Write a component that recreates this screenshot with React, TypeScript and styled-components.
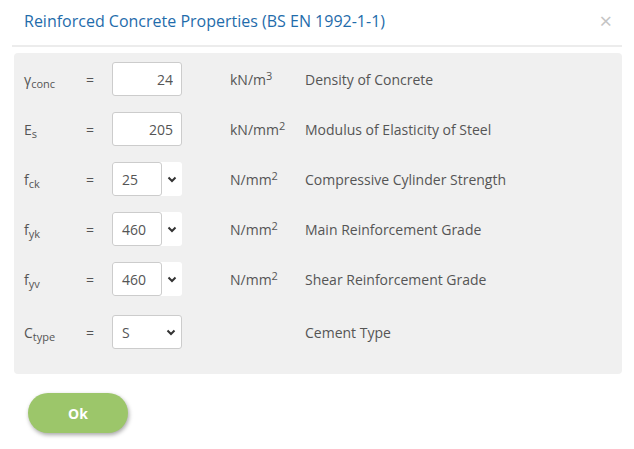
import React from 'react';
import styled, { createGlobalStyle } from 'styled-components';

const GlobalStyle = createGlobalStyle`
  html, body {
    margin: 0;
    padding: 0;
    background: #fff;
    font-family: "Open Sans", "Liberation Sans", sans-serif;
  }
`;

const Dialog = styled.div`
  width: 634px;
  height: 449px;
  box-sizing: border-box;
  padding: 0 12px 0 12px;
  background: #fff;
`;

const Header = styled.div`
  display: flex;
  justify-content: space-between;
  align-items: center;
  height: 45px;
  padding: 0 12px 0 12px;
  border-bottom: 2px solid #ececec;
`;

const Title = styled.h4`
  margin: 0;
  font-size: 16px;
  font-weight: 400;
  color: #1f6cab;
  padding-bottom: 4px;
`;

const Close = styled.span`
  font-size: 22px;
  line-height: 1;
  color: #c4c4c4;
  padding-bottom: 6px;
  margin-right: -2px;
`;

const Panel = styled.div`
  margin: 6px 0 0 2px;
  background: #f0f0f0;
  border-radius: 4px;
  padding: 9px 10px 25px 10px;
  display: flex;
  flex-direction: column;
  gap: 16px;
`;

const Row = styled.div<{ $extra?: number }>`
  display: grid;
  grid-template-columns: 61px 27px 70px 48px 75px 1fr;
  align-items: center;
  height: 34px;
  margin-top: ${(p) => p.$extra ?? 0}px;
  font-size: 14px;
  color: #555;
`;

const Symbol = styled.span`
  font-size: 14px;
  color: #555;
  sub {
    font-size: 11px;
    vertical-align: -3px;
    line-height: 0;
  }
`;

const Eq = styled.span`
  padding-left: 1px;
`;

const NumInput = styled.input`
  box-sizing: border-box;
  width: 70px;
  height: 34px;
  border: 1px solid #ccc;
  border-radius: 3px;
  background: #fff;
  text-align: right;
  padding: 0 8px;
  font: inherit;
  font-size: 14px;
  color: #555;
`;

const SelectWrap = styled.div<{ $wide?: boolean }>`
  position: relative;
  width: 70px;
  height: 34px;
  box-sizing: border-box;
  background: #fff;
  border: ${(p) => (p.$wide ? '1px solid #ccc' : 'none')};
  border-radius: 3px;
  display: flex;
  align-items: center;
`;

const SelectBox = styled.div<{ $wide?: boolean }>`
  box-sizing: border-box;
  width: ${(p) => (p.$wide ? '100%' : '50px')};
  height: 34px;
  border: ${(p) => (p.$wide ? 'none' : '1px solid #ccc')};
  border-radius: 3px;
  padding: 0 9px;
  display: flex;
  align-items: center;
  font-size: 14px;
  color: #555;
`;

const Arrow = styled.svg`
  position: absolute;
  right: 5px;
  top: 50%;
  margin-top: -3px;
`;

const Unit = styled.span`
  sup {
    font-size: 11px;
    vertical-align: 5px;
    line-height: 0;
  }
`;

const Desc = styled.span``;

const Footer = styled.div`
  padding: 19px 0 0 16px;
`;

const OkButton = styled.button`
  width: 100px;
  height: 40px;
  border: none;
  border-radius: 20px;
  background: #9cc66a;
  color: #fff;
  font-family: "Open Sans", "Liberation Sans", sans-serif;
  font-weight: 700;
  font-size: 14px;
  box-shadow: 1px 2px 4px rgba(0, 0, 0, 0.35);
  cursor: pointer;
`;

function Chevron() {
  return (
    <Arrow width="10" height="7" viewBox="0 0 10 7">
      <path d="M1.5 1.5 L5 5 L8.5 1.5" fill="none" stroke="#333" strokeWidth="2" />
    </Arrow>
  );
}

function Select(props: { value: string; wide?: boolean }) {
  return (
    <SelectWrap $wide={props.wide}>
      <SelectBox $wide={props.wide}>{props.value}</SelectBox>
      <Chevron />
    </SelectWrap>
  );
}

export default function App() {
  return (
    <Dialog>
      <GlobalStyle />
      <Header>
        <Title>Reinforced Concrete Properties (BS EN 1992-1-1)</Title>
        <Close>×</Close>
      </Header>
      <Panel>
        <Row>
          <Symbol>γ<sub>conc</sub></Symbol>
          <Eq>=</Eq>
          <NumInput defaultValue="24" />
          <span />
          <Unit>kN/m<sup>3</sup></Unit>
          <Desc>Density of Concrete</Desc>
        </Row>
        <Row>
          <Symbol>E<sub>s</sub></Symbol>
          <Eq>=</Eq>
          <NumInput defaultValue="205" />
          <span />
          <Unit>kN/mm<sup>2</sup></Unit>
          <Desc>Modulus of Elasticity of Steel</Desc>
        </Row>
        <Row>
          <Symbol>f<sub>ck</sub></Symbol>
          <Eq>=</Eq>
          <Select value="25" />
          <span />
          <Unit>N/mm<sup>2</sup></Unit>
          <Desc>Compressive Cylinder Strength</Desc>
        </Row>
        <Row>
          <Symbol>f<sub>yk</sub></Symbol>
          <Eq>=</Eq>
          <Select value="460" />
          <span />
          <Unit>N/mm<sup>2</sup></Unit>
          <Desc>Main Reinforcement Grade</Desc>
        </Row>
        <Row>
          <Symbol>f<sub>yv</sub></Symbol>
          <Eq>=</Eq>
          <Select value="460" />
          <span />
          <Unit>N/mm<sup>2</sup></Unit>
          <Desc>Shear Reinforcement Grade</Desc>
        </Row>
        <Row $extra={3}>
          <Symbol>C<sub>type</sub></Symbol>
          <Eq>=</Eq>
          <Select value="S" wide />
          <span />
          <Unit />
          <Desc>Cement Type</Desc>
        </Row>
      </Panel>
      <Footer>
        <OkButton>Ok</OkButton>
      </Footer>
    </Dialog>
  );
}
